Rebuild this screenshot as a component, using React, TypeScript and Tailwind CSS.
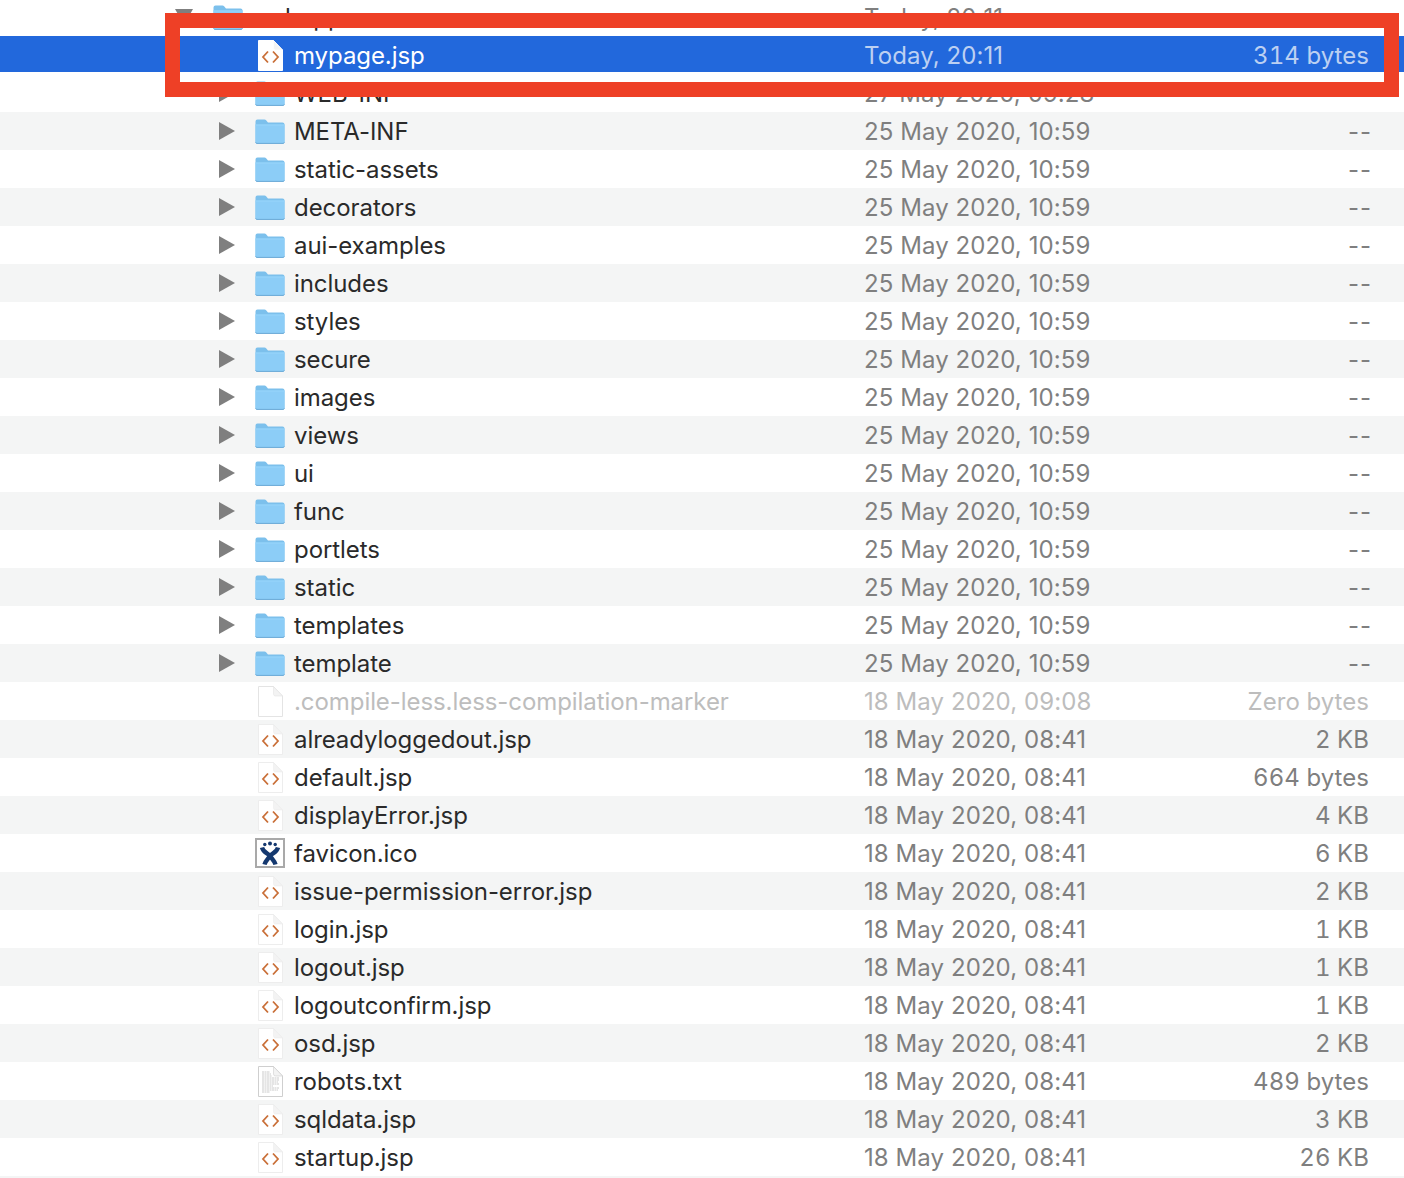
import React from "react";

type Kind = "folder" | "jsp" | "blank" | "ico" | "txt";
type Row = { name: string; date: string; size: string; kind: Kind; dim?: boolean };

const folders = ["META-INF", "static-assets", "decorators", "aui-examples", "includes", "styles", "secure", "images", "views", "ui", "func", "portlets", "static", "templates", "template"];
const rows: Row[] = [
  { name: "WEB-INF", date: "27 May 2020, 09:28", size: "--", kind: "folder" },
  ...folders.map((name): Row => ({ name, date: "25 May 2020, 10:59", size: "--", kind: "folder" })),
  { name: ".compile-less.less-compilation-marker", date: "18 May 2020, 09:08", size: "Zero bytes", kind: "blank", dim: true },
  { name: "alreadyloggedout.jsp", date: "18 May 2020, 08:41", size: "2 KB", kind: "jsp" },
  { name: "default.jsp", date: "18 May 2020, 08:41", size: "664 bytes", kind: "jsp" },
  { name: "displayError.jsp", date: "18 May 2020, 08:41", size: "4 KB", kind: "jsp" },
  { name: "favicon.ico", date: "18 May 2020, 08:41", size: "6 KB", kind: "ico" },
  { name: "issue-permission-error.jsp", date: "18 May 2020, 08:41", size: "2 KB", kind: "jsp" },
  { name: "login.jsp", date: "18 May 2020, 08:41", size: "1 KB", kind: "jsp" },
  { name: "logout.jsp", date: "18 May 2020, 08:41", size: "1 KB", kind: "jsp" },
  { name: "logoutconfirm.jsp", date: "18 May 2020, 08:41", size: "1 KB", kind: "jsp" },
  { name: "osd.jsp", date: "18 May 2020, 08:41", size: "2 KB", kind: "jsp" },
  { name: "robots.txt", date: "18 May 2020, 08:41", size: "489 bytes", kind: "txt" },
  { name: "sqldata.jsp", date: "18 May 2020, 08:41", size: "3 KB", kind: "jsp" },
  { name: "startup.jsp", date: "18 May 2020, 08:41", size: "26 KB", kind: "jsp" },
];

function Folder() {
  return (
    <svg width="30" height="25" viewBox="0 0 30 25" className="block">
      <path d="M.5 23V2.500A2 2 0 0 1 2.500.5h7a2 2 0 0 1 1.600.8L13 3.500h14.500a2 2 0 0 1 2 2V23a1.600 1.600 0 0 1-1.600 1.500H2.100A1.600 1.600 0 0 1 .5 23Z" fill="#7cc0ec" />
      <path d="M.5 5.500h29V23a1.400 1.400 0 0 1-1.400 1.300H1.900A1.400 1.400 0 0 1 .5 23Z" fill="#8ccdf7" />
      <path d="M.5 5.500h29v1H.5Z" fill="#98d4fa" />
      <path d="M.6 23.400a1.500 1.500 0 0 0 1.400 1h26a1.500 1.500 0 0 0 1.400-1" fill="none" stroke="#6ba9d6" strokeWidth="1" />
    </svg>
  );
}

function Page({ children, edge = "#e4e4e4" }: { children?: React.ReactNode; edge?: string }) {
  return (
    <svg width="25" height="31" viewBox="0 0 25 31" className="block">
      <path d="M.5.5h15l9 9.500v20.500H.5Z" fill="#fff" stroke={edge} strokeWidth="1" />
      <path d="M15.500.5v7.500a2 2 0 0 0 2 2h7Z" fill="#f3f3f3" stroke={edge} strokeWidth=".6" />
      {children}
    </svg>
  );
}

function Jsp({ selected }: { selected?: boolean }) {
  return (
    <Page edge={selected ? "#ffffff" : "#ededed"}>
      <path d="M10 11.500l-5 5.500 5 5.500M15 11.500l5 5.500-5 5.500" fill="none" stroke="#c96f38" strokeWidth="1.800" />
    </Page>
  );
}

function Txt() {
  const lines: [number, number][] = [[6, 12], [8, 13], [10, 14], [12, 21], [14, 21], [16, 20], [18, 21], [20, 15], [22, 21], [24, 20], [26, 12]];
  return (
    <Page edge="#cfcfcf">
      {lines.map(([y, x]) => (
        <path key={y} d={`M4 ${y}H${x}`} stroke="#b4b4b4" strokeWidth=".7" strokeDasharray="2 .5" />
      ))}
    </Page>
  );
}

function Ico() {
  return (
    <svg width="30" height="30" viewBox="0 0 30 30" className="block">
      <rect x="1" y="1" width="28" height="28" fill="#fff" stroke="#a9a9a9" strokeWidth="2" />
      <g fill="#14386f">
        <circle cx="15" cy="5.500" r="2" />
        <circle cx="9.800" cy="6.500" r="1.700" />
        <circle cx="20.200" cy="6.500" r="1.700" />
      </g>
      <path d="M7 9.500C8.500 15 13 15 15 18c2 3 4.500 5 5.500 8.500M23 9.500C21.500 15 17 15 15 18c-2 3-4.500 5-5.500 8.500" fill="none" stroke="#14386f" strokeWidth="4.400" />
    </svg>
  );
}

function Icon({ kind, selected }: { kind: Kind; selected?: boolean }) {
  if (kind === "folder") return <Folder />;
  if (kind === "ico") return <Ico />;
  return (
    <div className="ml-[3px]">
      {kind === "jsp" ? <Jsp selected={selected} /> : kind === "txt" ? <Txt /> : <Page />}
    </div>
  );
}

function Right() {
  return (
    <svg width="16" height="18" viewBox="0 0 16 18" className="block ml-[2px]">
      <path d="M0 0l16 9L0 18Z" fill="#7f7f7f" />
    </svg>
  );
}

function Down() {
  return (
    <svg width="18" height="16" viewBox="0 0 18 16" className="block">
      <path d="M0 0h18L9 16Z" fill="#7f7f7f" />
    </svg>
  );
}

function Columns({ date, size, name, nameClass, dateClass, shift }: { date: string; size: string; name: string; nameClass: string; dateClass: string; shift: string }) {
  const dashes = size === "--";
  return (
    <>
      <span className={`flex-1 whitespace-nowrap tracking-[-0.07px] ${shift} ${nameClass}`}>{name}</span>
      <span className={`w-[300px] whitespace-nowrap tracking-[0.08px] ${shift} ${dateClass}`}>{date}</span>
      <span className={`text-right whitespace-nowrap ${shift} ${dashes ? "w-[208px] mr-[32px] tracking-[1px]" : "w-[205px] mr-[35px] tabular-nums tracking-[0.05px]"} ${dateClass}`}>{size}</span>
    </>
  );
}

export default function App() {
  return (
    <div className="relative h-[1178px] w-full overflow-hidden bg-white font-['Inter',sans-serif] text-[24px]">
      <div className="-mt-[2px]">
        <div className="flex h-[38px] items-center pl-[175px]">
          <span className="w-[38px]"><Down /></span>
          <span className="w-[39px]"><Folder /></span>
          <span className="w-[612px] translate-y-px tracking-[-0.07px] text-[#2a2a2a]">webapp</span>
          <span className="w-[300px] translate-y-px tracking-[0.08px] text-[#7f7f7f]">Today, 20:11</span>
          <span className="w-[208px] mr-[32px] translate-y-px tracking-[1px] text-right text-[#7f7f7f]">--</span>
        </div>
        <div className="h-[38px]">
          <div className="flex h-[36px] items-center bg-[#2268dc] pl-[217px]">
            <span className="w-[38px]" />
            <span className="w-[39px] translate-y-px"><Icon kind="jsp" selected /></span>
            <Columns shift="translate-y-[2px]" name="mypage.jsp" date="Today, 20:11" size="314 bytes" nameClass="text-white" dateClass="text-[#bcd0f2]" />
          </div>
        </div>
        {rows.map((r, i) => (
          <div key={r.name} className={`flex h-[38px] items-center pl-[217px] ${i % 2 === 1 ? "bg-[#f4f5f5]" : "bg-white"}`}>
            <span className="w-[38px]">{r.kind === "folder" ? <Right /> : null}</span>
            <span className="w-[39px]"><Icon kind={r.kind} /></span>
            <Columns
              shift="translate-y-px"
              name={r.name}
              date={r.date}
              size={r.size}
              nameClass={r.dim ? "text-[#bdbdbd]" : "text-[#2a2a2a]"}
              dateClass={r.dim ? "text-[#bdbdbd]" : "text-[#7f7f7f]"}
            />
          </div>
        ))}
        <div className="h-[38px] bg-[#f4f5f5]" />
      </div>
      <div className="absolute left-[165px] top-[13px] h-[84px] w-[1234px] border-[15px] border-[#ee4026]" />
    </div>
  );
}
